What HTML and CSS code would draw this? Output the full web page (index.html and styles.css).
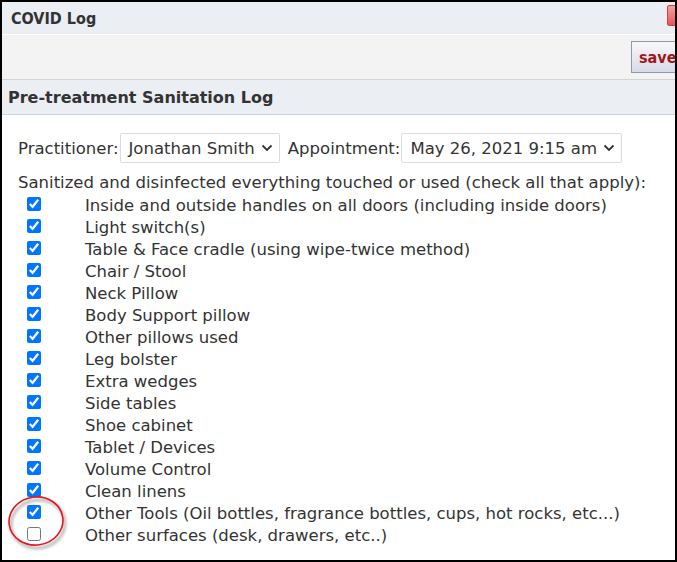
FILE: index.html
```html
<!DOCTYPE html>
<html>
<head>
<meta charset="utf-8">
<link rel="stylesheet" href="styles.css">
</head>
<body>
<div class="frame">
  <div class="titlebar">
    <span class="title">COVID Log</span>
    <span class="close"></span>
  </div>
  <div class="toolbar">
    <button class="save">save</button>
  </div>
  <div class="section-head">Pre-treatment Sanitation Log</div>
  <div class="content">
    <div class="pick-row">
      <label class="lbl">Practitioner:</label>
      <div class="select sel-prac">Jonathan Smith <svg class="chev" width="12" height="8" viewBox="0 0 12 8"><path d="M1.5 1.5 L6 6 L10.5 1.5" fill="none" stroke="#333" stroke-width="1.8"/></svg></div>
      <label class="lbl">Appointment:</label>
      <div class="select sel-appt">May 26, 2021 9:15 am <svg class="chev" width="12" height="8" viewBox="0 0 12 8"><path d="M1.5 1.5 L6 6 L10.5 1.5" fill="none" stroke="#333" stroke-width="1.8"/></svg></div>
    </div>
    <div class="intro">Sanitized and disinfected everything touched or used (check all that apply):</div>
    <ul class="checks">
      <li><input type="checkbox" checked><span>Inside and outside handles on all doors (including inside doors)</span></li>
      <li><input type="checkbox" checked><span>Light switch(s)</span></li>
      <li><input type="checkbox" checked><span>Table &amp; Face cradle (using wipe-twice method)</span></li>
      <li><input type="checkbox" checked><span>Chair / Stool</span></li>
      <li><input type="checkbox" checked><span>Neck Pillow</span></li>
      <li><input type="checkbox" checked><span>Body Support pillow</span></li>
      <li><input type="checkbox" checked><span>Other pillows used</span></li>
      <li><input type="checkbox" checked><span>Leg bolster</span></li>
      <li><input type="checkbox" checked><span>Extra wedges</span></li>
      <li><input type="checkbox" checked><span>Side tables</span></li>
      <li><input type="checkbox" checked><span>Shoe cabinet</span></li>
      <li><input type="checkbox" checked><span>Tablet / Devices</span></li>
      <li><input type="checkbox" checked><span>Volume Control</span></li>
      <li><input type="checkbox" checked><span>Clean linens</span></li>
      <li><input type="checkbox" checked><span>Other Tools (Oil bottles, fragrance bottles, cups, hot rocks, etc...)</span></li>
      <li><input type="checkbox"><span>Other surfaces (desk, drawers, etc..)</span></li>
    </ul>
    <svg class="ring" width="70" height="64" viewBox="0 0 70 64">
      <defs><filter id="sh" x="-20%" y="-20%" width="140%" height="140%"><feGaussianBlur stdDeviation="1.5"/></filter></defs>
      <ellipse cx="33" cy="34" rx="27" ry="24" fill="none" stroke="#9a9a9a" stroke-width="2" filter="url(#sh)" transform="rotate(-8 33 34)"/>
      <ellipse cx="31" cy="31" rx="27" ry="24" fill="none" stroke="#e8141c" stroke-width="1.6" transform="rotate(-8 31 31)"/>
    </svg>
  </div>
</div>
</body>
</html>
```
FILE: styles.css
```css
html, body {
  margin: 0;
  padding: 0;
  background: #000;
}
.frame {
  box-sizing: border-box;
  width: 677px;
  height: 562px;
  border: 2px solid #000;
  background: #fff;
  overflow: hidden;
  display: flex;
  flex-direction: column;
}
.titlebar {
  position: relative;
  height: 32px;
  background: #ebeef3;
  border-bottom: 1px solid #fff;
  display: flex;
  align-items: center;
  padding-left: 9px;
  flex: none;
}
.title {
  font-family: "DejaVu Sans Condensed", "DejaVu Sans", sans-serif;
  font-weight: bold;
  font-size: 16px;
  color: #333;
}
.close {
  position: absolute;
  right: -6px;
  top: 3px;
  width: 12px;
  height: 19px;
  background: linear-gradient(#f6a0a0, #e85555);
  border: 1px solid #c44;
  border-radius: 2px;
}
.toolbar {
  height: 44px;
  background: #f3f3f3;
  border-bottom: 1px solid #d4d4d4;
  display: flex;
  justify-content: flex-end;
  align-items: center;
  flex: none;
  overflow: hidden;
}
.save {
  margin-right: -28px;
  height: 32px;
  width: 72px;
  padding: 0 0 0 7px;
  text-align: left;
  border: 1px solid #8e9aa4;
  background: linear-gradient(#f8f8fb, #d9dae9);
  font-family: "DejaVu Sans Condensed", "DejaVu Sans", sans-serif;
  font-weight: bold;
  font-size: 16px;
  color: #a01818;
}
.section-head {
  height: 34px;
  background: #ebeef3;
  border-bottom: 1px solid #c9d3dd;
  display: flex;
  align-items: center;
  padding-left: 6px;
  font-family: "DejaVu Sans", sans-serif;
  font-weight: bold;
  font-size: 16px;
  color: #333;
  flex: none;
}
.content {
  position: relative;
  flex: 1;
  padding: 18px 0 0 16px;
  font-family: "DejaVu Sans", Verdana, sans-serif;
  font-size: 16.5px;
  color: #333;
}
.pick-row {
  display: flex;
  align-items: center;
  gap: 1px;
  height: 30px;
}
.select {
  box-sizing: border-box;
  height: 30px;
  border: 1px solid #dcdcdc;
  border-radius: 2px;
  display: flex;
  align-items: center;
  padding: 0 6px 0 8px;
  margin-right: 7px;
  color: #333;
  gap: 6px;
}
.chev {
  flex: none;
}
.intro {
  margin-top: 9px;
  line-height: 22px;
}
.checks {
  list-style: none;
  margin: 0;
  padding: 0;
}
.checks li {
  display: flex;
  align-items: center;
  height: 22px;
}
.checks input {
  width: 14px;
  height: 14px;
  margin: -2px 0 0 9px;
  accent-color: #0075ff;
}
.checks span {
  margin-left: 44px;
}
.ring {
  position: absolute;
  left: 3px;
  top: 375px;
}
```
